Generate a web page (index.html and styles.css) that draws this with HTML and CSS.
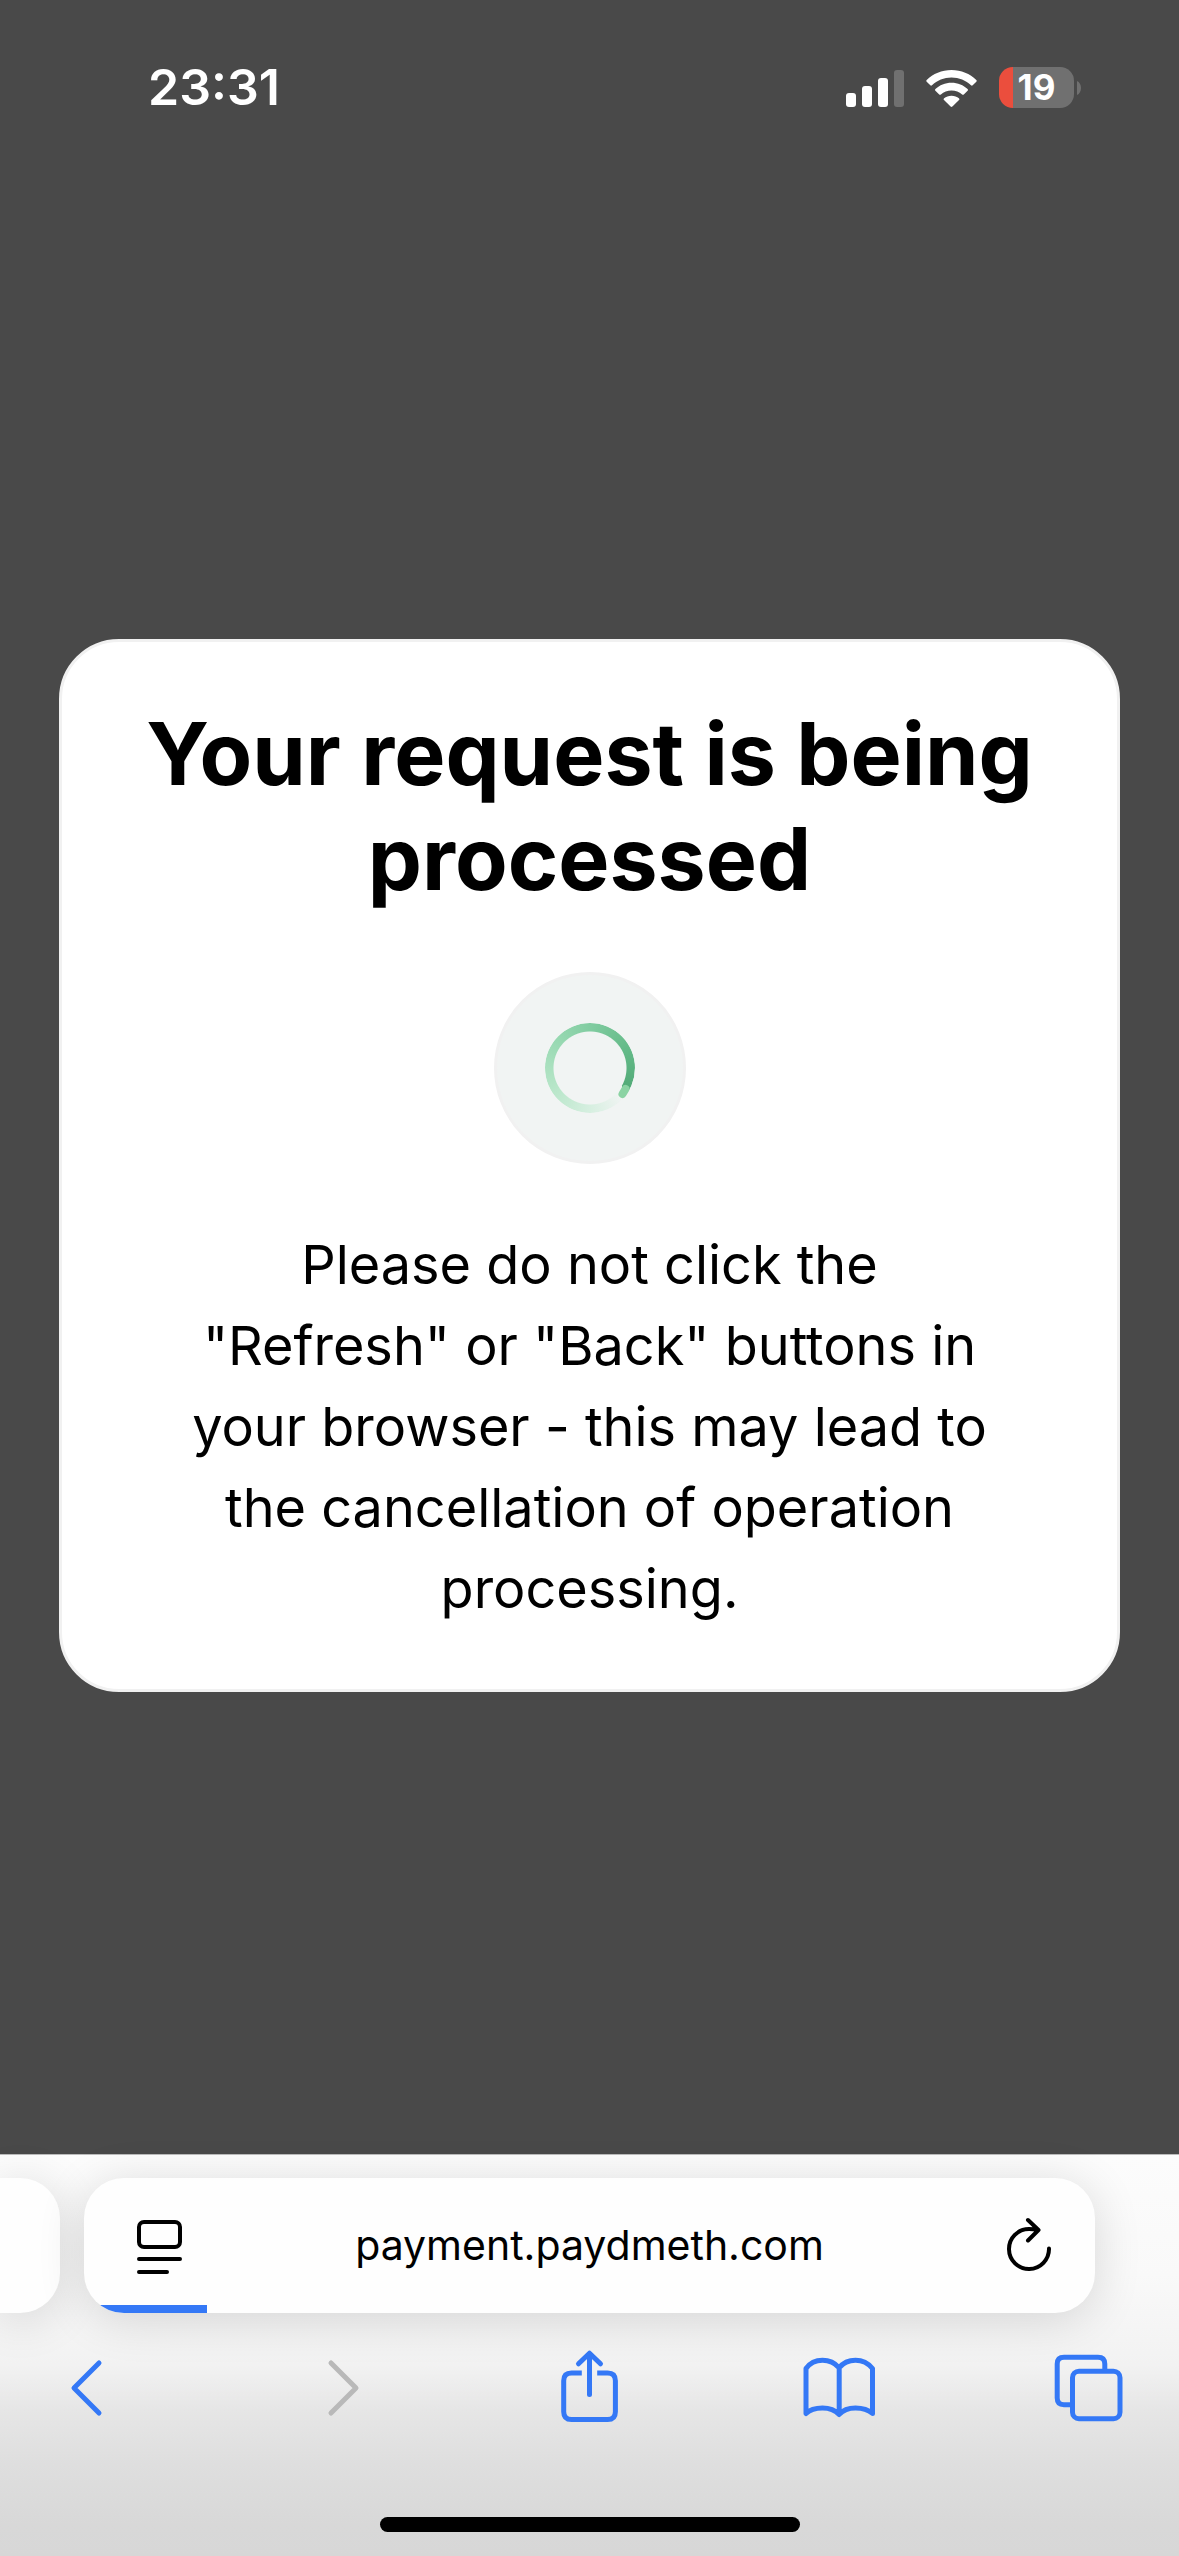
FILE: index.html
```html
<!DOCTYPE html>
<html lang="en">
<head>
<meta charset="utf-8">
<meta name="viewport" content="width=device-width, initial-scale=1">
<title>Processing</title>
<link rel="stylesheet" href="styles.css">
</head>
<body>
<header class="status">
  <time class="clock">23:31</time>
  <div class="indicators">
    <svg class="signal" viewBox="0 0 58 38" aria-hidden="true">
      <rect x="0" y="24" width="10" height="14" rx="3"/>
      <rect x="16" y="17" width="10" height="21" rx="3"/>
      <rect x="32" y="9" width="10" height="29" rx="3"/>
      <rect class="dim" x="48" y="1" width="10" height="37" rx="3"/>
    </svg>
    <svg class="wifi" viewBox="0 0 51 38" aria-hidden="true">
      <path d="M25.500 1C35.200 1 44 4.800 50.300 10.900Q51.200 11.800 50.300 12.700L46.700 16.300Q45.900 17.100 45 16.300C39.900 11.500 33 8.600 25.500 8.600S11.100 11.500 6 16.300Q5.100 17.100 4.300 16.300L.7 12.700Q-.2 11.800 .7 10.900C7 4.800 15.800 1 25.500 1Z"/>
      <path d="M25.500 13.700C31.800 13.700 37.400 16.100 41.600 20Q42.500 20.900 41.600 21.800L37.800 25.400Q37 26.200 36.100 25.400C33.300 22.900 29.600 21.400 25.500 21.400S17.700 22.900 14.900 25.400Q14 26.200 13.200 25.400L9.400 21.800Q8.500 20.900 9.400 20C13.600 16.100 19.200 13.700 25.500 13.700Z"/>
      <path d="M25.500 26.700C28.400 26.700 31 27.700 32.900 29.200Q33.800 30.100 33 31L26.400 37.500Q25.500 38.300 24.600 37.500L18 31Q17.200 30.100 18.100 29.200C20 27.700 22.600 26.700 25.500 26.700Z"/>
    </svg>
    <div class="battery">
      <span class="cell">19</span>
      <svg class="nub" viewBox="0 0 4 14" aria-hidden="true"><path d="M0 0C2.500 1 4 4 4 7S2.500 13 0 14Z"/></svg>
    </div>
  </div>
</header>

<main class="page">
  <section class="card" aria-live="polite">
    <h1 class="title">Your request is being processed</h1>
    <div class="loader">
      <div class="ring"></div>
      <svg class="ring-cap" viewBox="0 0 90 90" aria-hidden="true"><path d="M80.500 66L77.500 71"/></svg>
    </div>
    <p class="note">Please do not click the "Refresh" or "Back" buttons in your browser - this may lead to the cancellation of operation processing.</p>
  </section>
</main>

<footer class="browser">
  <div class="tabs">
    <div class="tab-prev"></div>
    <form class="address">
      <button class="address-btn" type="button" aria-label="Page menu">
        <svg viewBox="0 0 60 60"><rect x="13" y="6" width="41" height="25" rx="5"/><path d="M13 43H54M13 56H41"/></svg>
      </button>
      <input class="url" type="text" aria-label="Address" value="payment.paydmeth.com">
      <button class="address-btn" type="button" aria-label="Reload">
        <svg viewBox="0 0 60 60"><path d="M56 32.500A20 20 0 1 1 36 13Q40 13 45 14M35 4L45.500 14L35 24.500"/></svg>
      </button>
      <div class="progress"></div>
    </form>
  </div>
  <nav class="toolbar">
    <button class="tool" type="button" aria-label="Back"><svg viewBox="0 0 80 80"><path d="M53 16L28 41L53 66"/></svg></button>
    <button class="tool" type="button" aria-label="Forward" disabled><svg viewBox="0 0 80 80"><path d="M34 16L59 41L34 66"/></svg></button>
    <button class="tool" type="button" aria-label="Share"><svg viewBox="0 0 80 80"><path class="butt" d="M33.800 26H23.500Q15.700 26 15.700 33.800V64.800Q15.700 72.600 23.500 72.600H59.600Q67.400 72.600 67.400 64.800V33.800Q67.400 26 59.600 26H49.200"/><path d="M41.500 47.500V6.500M30.500 16.800L41.500 6.200L52.500 16.800"/></svg></button>
    <button class="tool" type="button" aria-label="Bookmarks"><svg viewBox="0 0 80 80"><path d="M8 21.500C12 16 18 13.300 24.500 13.300S37 16 41.200 20.800C45 16 51 13.300 57.500 13.300S70 16 74.500 21.500V66.500C70 62.500 64 61 57.500 61S45 63 41.200 67.500C37 63 31 61 24.500 61S12 62.500 8 66.500ZM41.200 21V67"/></svg></button>
    <button class="tool" type="button" aria-label="Tabs"><svg viewBox="0 0 80 80"><rect x="23.500" y="24.200" width="47.500" height="47.500" rx="6.500"/><path class="butt" d="M55.800 23V17Q55.800 10.300 49 10.300H15Q8.200 10.300 8.200 17V51Q8.200 57.700 15 57.700H22"/></svg></button>
  </nav>
  <div class="home"></div>
</footer>
</body>
</html>
```
FILE: styles.css
```css
* { box-sizing: border-box; }

body {
  margin: 0;
  min-height: 100vh;
  display: flex;
  flex-direction: column;
  background: #494949;
  color: #000;
  font-family: Inter, "Liberation Sans", sans-serif;
}

svg { display: block; }

button {
  padding: 0;
  border: 0;
  background: none;
}

/* Status bar */
.status {
  display: flex;
  justify-content: space-between;
  align-items: center;
  padding: 57px 98px 59px 148px;
  color: #fff;
}

.clock {
  font-size: 50px;
  font-weight: 600;
  line-height: 61px;
}

.indicators {
  display: flex;
  align-items: center;
  gap: 22px;
}

.signal { width: 58px; height: 38px; fill: #fff; }
.signal .dim { fill: #707070; }
.wifi { width: 51px; height: 38px; fill: #fff; }

.battery {
  display: flex;
  align-items: center;
  gap: 3px;
}

.cell {
  width: 75px;
  border-radius: 14px;
  background: linear-gradient(to right, #eb4e3d 14px, #707070 14px);
  font-size: 35px;
  font-weight: 700;
  line-height: 41px;
  text-align: center;
}

.nub { width: 4px; height: 14px; fill: #707070; }

/* Card */
.page {
  flex: 1;
  display: flex;
  justify-content: center;
  align-items: center;
}

.card {
  width: 90%;
  padding: 60px;
  display: flex;
  flex-direction: column;
  align-items: center;
  gap: 60px;
  border: 3px solid #f1f1f1;
  border-radius: 60px;
  background: #fff;
  text-align: center;
}

.title {
  margin: 0;
  font-size: 86px;
  font-weight: 700;
  line-height: 105px;
}

.loader {
  width: 192px;
  height: 192px;
  display: grid;
  place-items: center;
  place-content: center;
  border: 3px solid #f1f1f1;
  border-radius: 50%;
  background: #f1f4f3;
}

.ring, .ring-cap {
  grid-area: 1 / 1;
  width: 90px;
  height: 90px;
}

.ring {
  border-radius: 50%;
  background: conic-gradient(from 120deg, #f1f4f3 0deg, #f1f4f3 12deg, #d6efe0 60deg, #b8e6c9 120deg, #98d9b2 190deg, #7fcb9f 245deg, #65bb89 300deg, #52aa77 360deg);
  mask: radial-gradient(circle, transparent 36px, #000 37px);
}

.ring-cap {
  position: relative;
  fill: none;
  stroke: #8bd3a3;
  stroke-width: 8;
  stroke-linecap: round;
}

.note {
  margin: 0;
  padding: 0 60px;
  font-size: 54px;
  line-height: 81px;
}

/* Browser chrome */
.browser {
  padding: 23px 0 24px;
  border-top: 1px solid #bbb;
  background: linear-gradient(#fcfcfc 0, #f9f9f9 120px, #f2f2f2 210px, #e6e6e6 255px, #dedede 310px, #d8d8d8 370px, #d7d7d7 100%);
}

.tabs {
  display: flex;
  gap: 24px;
  padding-right: 84px;
}

.tab-prev, .address {
  height: 135px;
  background: #fefefe;
  box-shadow: 0 6px 48px rgba(0, 0, 0, 0.14);
}

.tab-prev {
  width: 60px;
  border-radius: 0 40px 40px 0;
}

.address {
  position: relative;
  flex: 1;
  min-width: 0;
  display: flex;
  align-items: center;
  padding: 0 42px;
  border-radius: 40px;
}

.address-btn svg {
  width: 60px;
  height: 60px;
  fill: none;
  stroke: #000;
  stroke-width: 4;
  stroke-linecap: round;
  stroke-linejoin: round;
}

.url {
  flex: 1;
  min-width: 0;
  padding: 0;
  border: 0;
  background: none;
  color: #000;
  font-family: inherit;
  font-size: 41px;
  line-height: 51px;
  text-align: center;
}

/* Load progress along the lower edge of the address field */
.progress {
  position: absolute;
  inset: 0;
  border-radius: inherit;
  background: linear-gradient(#3478f6, #3478f6) left bottom / 123px 8px no-repeat;
  pointer-events: none;
}

.toolbar {
  display: flex;
  justify-content: space-between;
  padding: 34px 50px 90px 46px;
}

.tool svg {
  width: 80px;
  height: 80px;
  fill: none;
  stroke: #3478f6;
  stroke-width: 5;
  stroke-linecap: round;
  stroke-linejoin: round;
}

.tool:disabled svg { stroke: #b9b9b9; }
.tool .butt { stroke-linecap: butt; }

.home {
  width: 420px;
  height: 15px;
  margin: 0 auto;
  border-radius: 8px;
  background: #000;
}
```
